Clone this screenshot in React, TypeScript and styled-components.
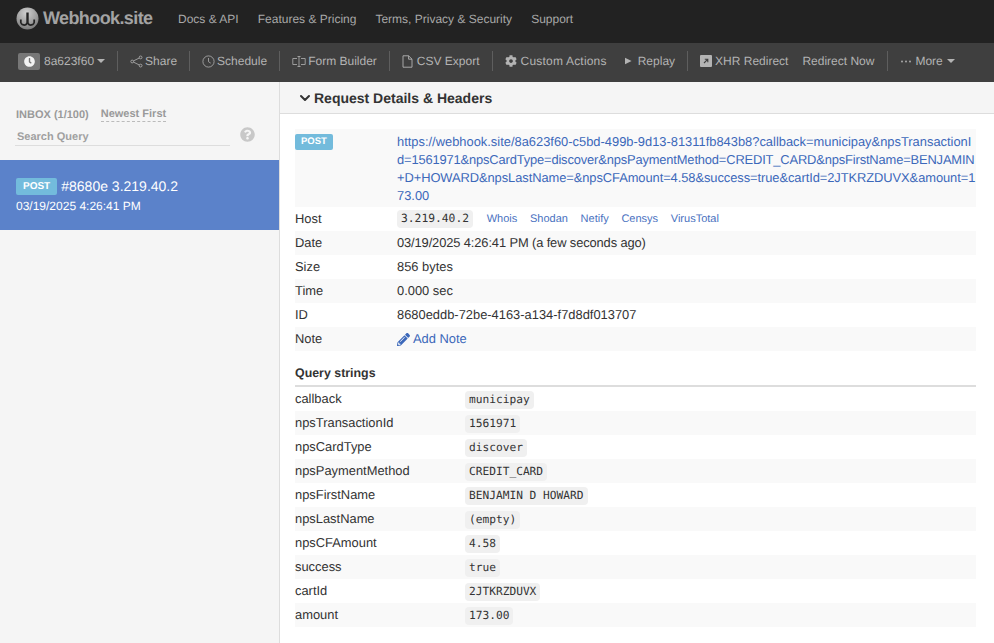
import React from "react";
import styled, { createGlobalStyle } from "styled-components";
import { FaClock, FaCog, FaPencilAlt, FaQuestionCircle } from "react-icons/fa";
import { FiChevronDown } from "react-icons/fi";

const Global = createGlobalStyle`
  html, body { margin: 0; padding: 0; height: 100%; background: #fff; }
  body { font-family: "Liberation Sans", Arial, sans-serif; overflow: hidden; text-rendering: geometricPrecision; }
  #root { height: 100%; }
`;

const Page = styled.div`
  display: flex;
  flex-direction: column;
  width: 994px;
  height: 643px;
  overflow: hidden;
`;

const NavBar = styled.div`
  display: flex;
  align-items: center;
  height: 43px;
  flex: none;
  padding: 0 0 6px 16px;
  background: #222222;
  box-sizing: border-box;
`;

const Brand = styled.div`
  display: flex;
  align-items: center;
  gap: 4px;
  width: 162px;
  flex: none;
  color: #a3a3a3;
  font-size: 18px;
  font-weight: 700;
  letter-spacing: -0.6px;
`;

const NavLink = styled.a`
  color: #a8a8a8;
  font-size: 12px;
  margin-right: 19px;
`;

const ToolBar = styled.div`
  display: flex;
  align-items: center;
  height: 39px;
  flex: none;
  padding: 0 0 3px 18px;
  background: #3f3f3f;
  box-sizing: border-box;
  color: #b3b3b3;
  font-size: 12px;
`;

const ClockBadge = styled.span`
  display: flex;
  align-items: center;
  justify-content: center;
  width: 22px;
  height: 17px;
  background: #777777;
  border-radius: 2px;
  color: #f2f2f2;
  margin-right: 4px;
`;

const Tool = styled.span<{ $gap?: number; $after?: number; $track?: number }>`
  display: flex;
  align-items: center;
  gap: ${(p) => p.$gap ?? 2}px;
  margin-right: ${(p) => p.$after ?? 0}px;
  letter-spacing: ${(p) => p.$track ?? 0}px;
  white-space: nowrap;
`;

const Sep = styled.span`
  width: 1px;
  height: 20px;
  background: #5e5e5e;
  margin: 0 12px;
  flex: none;
`;

const Caret = styled.span`
  display: inline-block;
  width: 0;
  height: 0;
  margin-left: 1px;
  border-left: 4px solid transparent;
  border-right: 4px solid transparent;
  border-top: 4px solid #b3b3b3;
`;

const Body = styled.div`
  display: flex;
  flex: 1;
  min-height: 0;
`;

const Side = styled.aside`
  width: 280px;
  flex: none;
  background: #f5f5f5;
  border-right: 1px solid #dddddd;
  box-sizing: border-box;
`;

const InboxHead = styled.div`
  display: flex;
  align-items: center;
  gap: 12px;
  padding: 26px 16px 0;
  height: 13px;
  box-sizing: content-box;
  color: #9a9a9a;
  font-size: 11px;
  font-weight: 700;
`;

const SortLabel = styled.span`
  border-bottom: 1px dashed #bbbbbb;
  padding-bottom: 1px;
`;

const SearchRow = styled.div`
  display: flex;
  align-items: center;
  gap: 10px;
  margin: 1px 0 0 15px;
  height: 24px;
  color: #c8c8c8;
`;

const SearchBox = styled.div`
  width: 215px;
  height: 24px;
  box-sizing: border-box;
  padding: 9px 2px 0;
  border-bottom: 1px solid #dddddd;
  color: #a0a0a0;
  font-size: 11px;
  font-weight: 700;
  line-height: 12px;
`;

const InboxItem = styled.div`
  margin-top: 14px;
  height: 70px;
  width: 279px;
  background: #5b82ca;
  box-sizing: border-box;
  padding: 17px 16px 0;
  color: #ffffff;
`;

const ItemTitle = styled.div`
  display: flex;
  align-items: center;
  gap: 4px;
  font-size: 14px;
  height: 17px;
`;

const ItemDate = styled.div`
  font-size: 12px;
  margin-top: 5px;
`;

const Badge = styled.span`
  display: block;
  width: fit-content;
  background: #73bbdc;
  color: #fff;
  font-size: 10px;
  font-weight: 700;
  line-height: 17px;
  height: 17px;
  padding: 0 7px;
  border-radius: 2px;
`;

const TitleBadge = styled(Badge)`
  margin-top: 2px;
`;

const Main = styled.main`
  flex: 1;
  min-width: 0;
`;

const PanelHead = styled.div`
  display: flex;
  align-items: center;
  gap: 1px;
  height: 32px;
  box-sizing: border-box;
  padding-left: 17px;
  background: #f5f5f5;
  border-bottom: 1px solid #dddddd;
  color: #333333;
  font-size: 14px;
  font-weight: 700;
`;

const Content = styled.div`
  padding: 15px 18px 0 15px;
`;

const Row = styled.div<{ $odd?: boolean; $col?: number }>`
  display: grid;
  grid-template-columns: ${(p) => p.$col ?? 102}px 1fr;
  align-items: center;
  height: 24px;
  line-height: 22px;
  background: ${(p) => (p.$odd ? "#f9f9f9" : "#ffffff")};
  color: #333333;
  font-size: 12.9px;
`;

const UrlRow = styled(Row)`
  align-items: start;
  height: 78px;
  padding-top: 3px;
  box-sizing: border-box;
`;

const Url = styled.a`
  color: #3c68ba;
  font-size: 12.9px;
  display: block;
  padding-top: 1px;
`;

const UrlLine = styled.span<{ $track?: number }>`
  display: block;
  line-height: 18px;
  white-space: nowrap;
  letter-spacing: ${(p) => p.$track ?? 0}px;
`;

const UrlBadge = styled(Badge)`
  margin-top: 2px;
  font-size: 9.5px;
  height: 16px;
  line-height: 15px;
  padding: 0 6px;
`;

const Links = styled.div`
  display: flex;
  align-items: center;
`;

const SmallLink = styled.a`
  color: #4a72bf;
  font-size: 11px;
  margin-left: 12.7px;
`;

const DateText = styled.span`
  letter-spacing: -0.12px;
`;

const Code = styled.code`
  display: inline-block;
  font-family: "DejaVu Sans Mono", monospace;
  font-size: 11.2px;
  line-height: 18px;
  color: #333333;
  background: #f0f0f0;
  border-radius: 4px;
  padding: 0 4px;
  vertical-align: middle;
`;

const HostCode = styled(Code)`
  font-size: 11.3px;
  margin-right: 1px;
`;

const AddNote = styled.a`
  display: inline-flex;
  align-items: center;
  gap: 3px;
  color: #3c68ba;
`;

const SectionTitle = styled.div`
  margin-top: 15px;
  height: 21px;
  box-sizing: border-box;
  border-bottom: 2px solid #dddddd;
  color: #333333;
  font-size: 12.4px;
  font-weight: 700;
  line-height: 14px;
`;

const Logo = () => (
  <svg width="23" height="23" viewBox="0 0 23 23">
    <defs>
      <radialGradient id="lg" cx="0.45" cy="0.25" r="0.85">
        <stop offset="0" stopColor="#d0d0d0" />
        <stop offset="0.6" stopColor="#9a9a9a" />
        <stop offset="1" stopColor="#6e6e6e" />
      </radialGradient>
    </defs>
    <circle cx="11.5" cy="11.5" r="11" fill="url(#lg)" />
    <path d="M11.5 5.5v10" fill="none" stroke="#242424" strokeWidth="2.4" />
    <path d="M4.8 12.5v1.5a3.4 3.4 0 0 0 6.7 1.2 3.4 3.4 0 0 0 6.7-1.2v-1.5" fill="none" stroke="#242424" strokeWidth="1.8" />
  </svg>
);

const ShareIcon = () => (
  <svg width="13" height="13" viewBox="0 0 13 13" fill="none" stroke="#b3b3b3" strokeWidth="0.8">
    <circle cx="2.2" cy="6.5" r="1.4" />
    <circle cx="10.6" cy="2.4" r="1.4" />
    <circle cx="10.6" cy="10.6" r="1.4" />
    <path d="M3.5 5.9 9.3 3M3.5 7.1l5.8 2.9" />
  </svg>
);

const ClockLine = () => (
  <svg width="13" height="13" viewBox="0 0 13 13" fill="none" stroke="#b3b3b3" strokeWidth="0.8">
    <circle cx="6.5" cy="6.5" r="5.6" />
    <path d="M6.5 3v3.7l2.2 1.4" />
  </svg>
);

const FormIcon = () => (
  <svg width="14" height="13" viewBox="0 0 14 13" fill="none" stroke="#b3b3b3" strokeWidth="0.8">
    <path d="M5 3.5H.8v6H5M9 3.5h4.2v6H9" />
    <path d="M7 1.5v10M5.5 1.5h3M5.5 11.5h3" />
  </svg>
);

const FileIcon = () => (
  <svg width="11" height="13" viewBox="0 0 11 13" fill="none" stroke="#b3b3b3" strokeWidth="0.9">
    <path d="M1 .8h5.6L10 4.2v8H1zM6.6.8v3.4H10" />
  </svg>
);

const PlayIcon = () => (
  <svg width="7" height="8" viewBox="0 0 7 8">
    <path d="M0 .8 6.6 4 0 7.2z" fill="#b3b3b3" />
  </svg>
);

const XhrIcon = () => (
  <svg width="12" height="12" viewBox="0 0 12 12">
    <rect width="12" height="12" rx="1" fill="#b3b3b3" />
    <path d="M4 8l3.4-3.4M4.8 4.2h3v3" stroke="#3f3f3f" strokeWidth="1.1" fill="none" />
  </svg>
);

const DotsIcon = () => (
  <svg width="12" height="3" viewBox="0 0 12 3" fill="#b3b3b3">
    <circle cx="2" cy="1.5" r="0.9" />
    <circle cx="6" cy="1.5" r="0.9" />
    <circle cx="10" cy="1.5" r="0.9" />
  </svg>
);

const query: [string, string][] = [
  ["callback", "municipay"],
  ["npsTransactionId", "1561971"],
  ["npsCardType", "discover"],
  ["npsPaymentMethod", "CREDIT_CARD"],
  ["npsFirstName", "BENJAMIN D HOWARD"],
  ["npsLastName", "(empty)"],
  ["npsCFAmount", "4.58"],
  ["success", "true"],
  ["cartId", "2JTKRZDUVX"],
  ["amount", "173.00"],
];

const urlLines: [string, number][] = [
  ["https://webhook.site/8a623f60-c5bd-499b-9d13-81311fb843b8?callback=municipay&npsTransactionI", 0],
  ["d=1561971&npsCardType=discover&npsPaymentMethod=CREDIT_CARD&npsFirstName=BENJAMIN", -0.15],
  ["+D+HOWARD&npsLastName=&npsCFAmount=4.58&success=true&cartId=2JTKRZDUVX&amount=1", -0.07],
  ["73.00", 0],
];

export default function App() {
  return (
    <Page>
      <Global />
      <NavBar>
        <Brand>
          <Logo />
          <span>Webhook.site</span>
        </Brand>
        <NavLink>Docs &amp; API</NavLink>
        <NavLink>Features &amp; Pricing</NavLink>
        <NavLink>Terms, Privacy &amp; Security</NavLink>
        <NavLink>Support</NavLink>
      </NavBar>
      <ToolBar>
        <ClockBadge>
          <FaClock size={11} />
        </ClockBadge>
        <Tool>
          8a623f60
          <Caret />
        </Tool>
        <Sep />
        <Tool>
          <ShareIcon />
          Share
        </Tool>
        <Sep />
        <Tool>
          <ClockLine />
          Schedule
        </Tool>
        <Sep />
        <Tool>
          <FormIcon />
          Form Builder
        </Tool>
        <Sep />
        <Tool $gap={4}>
          <FileIcon />
          CSV Export
        </Tool>
        <Sep />
        <Tool $after={18} $gap={4} $track={0.2}>
          <FaCog size={12} />
          Custom Actions
        </Tool>
        <Tool $gap={6}>
          <PlayIcon />
          Replay
        </Tool>
        <Sep />
        <Tool $after={14} $gap={3}>
          <XhrIcon />
          XHR Redirect
        </Tool>
        <Tool $after={1}>Redirect Now</Tool>
        <Sep />
        <Tool $gap={3}>
          <DotsIcon />
          More
          <Caret />
        </Tool>
      </ToolBar>
      <Body>
        <Side>
          <InboxHead>
            <span>INBOX (1/100)</span>
            <SortLabel>Newest First</SortLabel>
          </InboxHead>
          <SearchRow>
            <SearchBox>Search Query</SearchBox>
            <FaQuestionCircle size={15} />
          </SearchRow>
          <InboxItem>
            <ItemTitle>
              <TitleBadge>POST</TitleBadge>#8680e 3.219.40.2
            </ItemTitle>
            <ItemDate>03/19/2025 4:26:41 PM</ItemDate>
          </InboxItem>
        </Side>
        <Main>
          <PanelHead>
            <FiChevronDown size={16} strokeWidth={3} />
            Request Details &amp; Headers
          </PanelHead>
          <Content>
            <UrlRow $odd>
              <div>
                <UrlBadge>POST</UrlBadge>
              </div>
              <Url>
                {urlLines.map(([text, track]) => (
                  <UrlLine key={text} $track={track}>
                    {text}
                  </UrlLine>
                ))}
              </Url>
            </UrlRow>
            <Row>
              <span>Host</span>
              <Links>
                <HostCode>3.219.40.2</HostCode>
                <SmallLink>Whois</SmallLink>
                <SmallLink>Shodan</SmallLink>
                <SmallLink>Netify</SmallLink>
                <SmallLink>Censys</SmallLink>
                <SmallLink>VirusTotal</SmallLink>
              </Links>
            </Row>
            <Row $odd>
              <span>Date</span>
              <DateText>03/19/2025 4:26:41 PM (a few seconds ago)</DateText>
            </Row>
            <Row>
              <span>Size</span>
              <span>856 bytes</span>
            </Row>
            <Row $odd>
              <span>Time</span>
              <span>0.000 sec</span>
            </Row>
            <Row>
              <span>ID</span>
              <span>8680eddb-72be-4163-a134-f7d8df013707</span>
            </Row>
            <Row $odd>
              <span>Note</span>
              <AddNote>
                <FaPencilAlt size={13} />
                Add Note
              </AddNote>
            </Row>
            <SectionTitle>Query strings</SectionTitle>
            {query.map(([k, v], i) => (
              <Row key={k} $col={170} $odd={i % 2 === 1}>
                <span>{k}</span>
                <span>
                  <Code>{v}</Code>
                </span>
              </Row>
            ))}
          </Content>
        </Main>
      </Body>
    </Page>
  );
}
